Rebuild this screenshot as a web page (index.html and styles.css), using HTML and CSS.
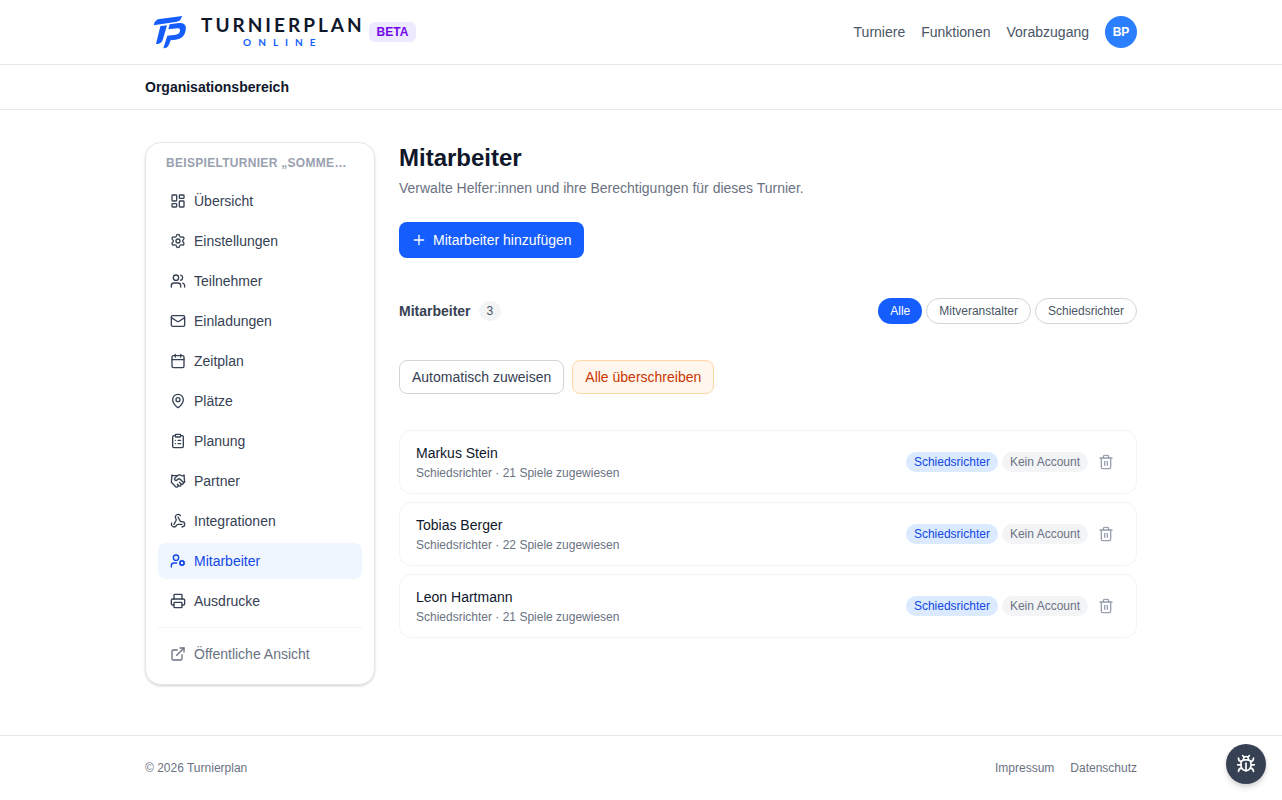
FILE: index.html
```html
<!DOCTYPE html>
<html lang="de">
<head>
    <meta charset="UTF-8">
    <meta name="viewport" content="width=device-width, initial-scale=1.0">
    <title>Mitarbeiter - Turnierplan</title>
    <link rel="stylesheet" href="styles.css">
</head>
<body>
    <header class="topbar">
        <div class="container topbar-inner">
            <a href="#" class="brand">
                <svg class="brand-mark" viewBox="0 0 102 102" aria-hidden="true">
                    <path d="M2 31C4 20 10 13 20 12L88 3L83 13C81 17 77 19 72 20Z"/>
                    <path d="M22 34C23 33 25 33 42 31L30 72C27 82 22 87 9 87Z"/>
                    <path d="M50 28L78 24C94 22 101 31 98 46C95 64 84 72 68 74L53 76L47 91C44 97 40 99 31 100L43 62L68 59C76 58 80 54 81 48C82 42 79 39 73 40L46 43Z"/>
                </svg>
                <span class="brand-text">
                    <span class="brand-name">TURNIERPLAN</span>
                    <span class="brand-sub">ONLINE</span>
                </span>
            </a>
            <span class="beta">BETA</span>
            <nav class="topnav">
                <a href="#">Turniere</a>
                <a href="#">Funktionen</a>
                <a href="#">Vorabzugang</a>
                <button type="button" class="avatar">BP</button>
            </nav>
        </div>
    </header>

    <div class="subbar">
        <div class="container">Organisationsbereich</div>
    </div>

    <div class="container layout">
        <aside class="sidebar">
            <div class="sidebar-title">Beispielturnier „Somme…</div>
            <nav class="menu">
                <a href="#">
                    <svg class="icon" viewBox="0 0 24 24"><rect width="7" height="9" x="3" y="3" rx="1"/><rect width="7" height="5" x="14" y="3" rx="1"/><rect width="7" height="9" x="14" y="12" rx="1"/><rect width="7" height="5" x="3" y="16" rx="1"/></svg>
                    Übersicht
                </a>
                <a href="#">
                    <svg class="icon" viewBox="0 0 24 24"><path d="M9.671 4.136a2.34 2.34 0 0 1 4.659 0 2.34 2.34 0 0 0 3.319 1.915 2.34 2.34 0 0 1 2.33 4.033 2.34 2.34 0 0 0 0 3.831 2.34 2.34 0 0 1-2.33 4.033 2.34 2.34 0 0 0-3.319 1.915 2.34 2.34 0 0 1-4.659 0 2.34 2.34 0 0 0-3.32-1.915 2.34 2.34 0 0 1-2.33-4.033 2.34 2.34 0 0 0 0-3.831A2.34 2.34 0 0 1 6.35 6.051a2.34 2.34 0 0 0 3.319-1.915"/><circle cx="12" cy="12" r="3"/></svg>
                    Einstellungen
                </a>
                <a href="#">
                    <svg class="icon" viewBox="0 0 24 24"><path d="M16 21v-2a4 4 0 0 0-4-4H6a4 4 0 0 0-4 4v2"/><circle cx="9" cy="7" r="4"/><path d="M22 21v-2a4 4 0 0 0-3-3.87"/><path d="M16 3.13a4 4 0 0 1 0 7.75"/></svg>
                    Teilnehmer
                </a>
                <a href="#">
                    <svg class="icon" viewBox="0 0 24 24"><path d="m22 7-8.991 5.727a2 2 0 0 1-2.009 0L2 7"/><rect x="2" y="4" width="20" height="16" rx="2"/></svg>
                    Einladungen
                </a>
                <a href="#">
                    <svg class="icon" viewBox="0 0 24 24"><path d="M8 2v4"/><path d="M16 2v4"/><rect width="18" height="18" x="3" y="4" rx="2"/><path d="M3 10h18"/></svg>
                    Zeitplan
                </a>
                <a href="#">
                    <svg class="icon" viewBox="0 0 24 24"><path d="M20 10c0 4.993-5.539 10.193-7.399 11.799a1 1 0 0 1-1.202 0C9.539 20.193 4 14.993 4 10a8 8 0 0 1 16 0"/><circle cx="12" cy="10" r="3"/></svg>
                    Plätze
                </a>
                <a href="#">
                    <svg class="icon" viewBox="0 0 24 24"><rect width="8" height="4" x="8" y="2" rx="1"/><path d="M16 4h2a2 2 0 0 1 2 2v14a2 2 0 0 1-2 2H6a2 2 0 0 1-2-2V6a2 2 0 0 1 2-2h2"/><path d="M12 11h4"/><path d="M12 16h4"/><path d="M8 11h.01"/><path d="M8 16h.01"/></svg>
                    Planung
                </a>
                <a href="#">
                    <svg class="icon" viewBox="0 0 24 24"><path d="m11 17 2 2a1 1 0 1 0 3-3"/><path d="m14 14 2.5 2.5a1 1 0 1 0 3-3l-3.88-3.88a3 3 0 0 0-4.24 0l-.88.88a1 1 0 1 1-3-3l2.81-2.81a5.79 5.79 0 0 1 7.06-.87l.47.28a2 2 0 0 0 1.42.25L21 4"/><path d="m21 3 1 11h-2"/><path d="M3 3 2 14l6.5 6.5a1 1 0 1 0 3-3"/><path d="M3 4h8"/></svg>
                    Partner
                </a>
                <a href="#">
                    <svg class="icon" viewBox="0 0 24 24"><path d="M18 16.98h-5.99c-1.1 0-1.95.94-2.48 1.9A4 4 0 0 1 2 17c.01-.7.2-1.4.57-2"/><path d="m6 17 3.13-5.78c.53-.97.1-2.18-.5-3.1a4 4 0 1 1 6.89-4.06"/><path d="m12 6 3.13 5.73C15.66 12.7 16.9 13 18 13a4 4 0 0 1 0 8"/></svg>
                    Integrationen
                </a>
                <a href="#" class="active">
                    <svg class="icon" viewBox="0 0 24 24"><path d="M10 15H6a4 4 0 0 0-4 4v2"/><circle cx="9" cy="7" r="4"/><circle cx="18" cy="15" r="3"/><path d="m14.305 16.53.923-.382"/><path d="m15.228 13.852-.923-.383"/><path d="m16.852 12.228-.383-.923"/><path d="m16.852 17.772-.383.924"/><path d="m19.148 12.228.383-.923"/><path d="m19.53 18.696-.382-.924"/><path d="m20.772 13.852.924-.383"/><path d="m20.772 16.148.924.383"/></svg>
                    Mitarbeiter
                </a>
                <a href="#">
                    <svg class="icon" viewBox="0 0 24 24"><path d="M6 18H4a2 2 0 0 1-2-2v-5a2 2 0 0 1 2-2h16a2 2 0 0 1 2 2v5a2 2 0 0 1-2 2h-2"/><path d="M6 9V3a1 1 0 0 1 1-1h10a1 1 0 0 1 1 1v6"/><rect x="6" y="14" width="12" height="8" rx="1"/></svg>
                    Ausdrucke
                </a>
            </nav>
            <div class="menu menu-extra">
                <a href="#">
                    <svg class="icon" viewBox="0 0 24 24"><path d="M15 3h6v6"/><path d="M10 14 21 3"/><path d="M18 13v6a2 2 0 0 1-2 2H5a2 2 0 0 1-2-2V8a2 2 0 0 1 2-2h6"/></svg>
                    Öffentliche Ansicht
                </a>
            </div>
        </aside>

        <main class="content">
            <h1>Mitarbeiter</h1>
            <p class="lead">Verwalte Helfer:innen und ihre Berechtigungen für dieses Turnier.</p>

            <button type="button" class="btn btn-primary">
                <svg class="icon" viewBox="0 0 24 24"><path d="M5 12h14"/><path d="M12 5v14"/></svg>
                Mitarbeiter hinzufügen
            </button>

            <div class="list-head">
                <h2>Mitarbeiter</h2>
                <span class="count">3</span>
                <div class="filters">
                    <button type="button" class="pill selected">Alle</button>
                    <button type="button" class="pill">Mitveranstalter</button>
                    <button type="button" class="pill">Schiedsrichter</button>
                </div>
            </div>

            <div class="actions">
                <button type="button" class="btn btn-outline">Automatisch zuweisen</button>
                <button type="button" class="btn btn-warn">Alle überschreiben</button>
            </div>

            <ul class="staff">
                <li class="person">
                    <div class="person-info">
                        <div class="person-name">Markus Stein</div>
                        <div class="person-meta">Schiedsrichter · 21 Spiele zugewiesen</div>
                    </div>
                    <span class="tag tag-role">Schiedsrichter</span>
                    <span class="tag">Kein Account</span>
                    <button type="button" class="delete" aria-label="Markus Stein entfernen">
                        <svg class="icon" viewBox="0 0 24 24"><path d="M10 11v6"/><path d="M14 11v6"/><path d="M19 6v14a2 2 0 0 1-2 2H7a2 2 0 0 1-2-2V6"/><path d="M3 6h18"/><path d="M8 6V4a2 2 0 0 1 2-2h4a2 2 0 0 1 2 2v2"/></svg>
                    </button>
                </li>
                <li class="person">
                    <div class="person-info">
                        <div class="person-name">Tobias Berger</div>
                        <div class="person-meta">Schiedsrichter · 22 Spiele zugewiesen</div>
                    </div>
                    <span class="tag tag-role">Schiedsrichter</span>
                    <span class="tag">Kein Account</span>
                    <button type="button" class="delete" aria-label="Tobias Berger entfernen">
                        <svg class="icon" viewBox="0 0 24 24"><path d="M10 11v6"/><path d="M14 11v6"/><path d="M19 6v14a2 2 0 0 1-2 2H7a2 2 0 0 1-2-2V6"/><path d="M3 6h18"/><path d="M8 6V4a2 2 0 0 1 2-2h4a2 2 0 0 1 2 2v2"/></svg>
                    </button>
                </li>
                <li class="person">
                    <div class="person-info">
                        <div class="person-name">Leon Hartmann</div>
                        <div class="person-meta">Schiedsrichter · 21 Spiele zugewiesen</div>
                    </div>
                    <span class="tag tag-role">Schiedsrichter</span>
                    <span class="tag">Kein Account</span>
                    <button type="button" class="delete" aria-label="Leon Hartmann entfernen">
                        <svg class="icon" viewBox="0 0 24 24"><path d="M10 11v6"/><path d="M14 11v6"/><path d="M19 6v14a2 2 0 0 1-2 2H7a2 2 0 0 1-2-2V6"/><path d="M3 6h18"/><path d="M8 6V4a2 2 0 0 1 2-2h4a2 2 0 0 1 2 2v2"/></svg>
                    </button>
                </li>
            </ul>
        </main>
    </div>

    <footer class="footer">
        <div class="container footer-inner">
            <span>© 2026 Turnierplan</span>
            <nav class="footer-links">
                <a href="#">Impressum</a>
                <a href="#">Datenschutz</a>
            </nav>
        </div>
    </footer>

    <button type="button" class="bug-button" aria-label="Fehler melden">
        <svg class="icon" viewBox="0 0 24 24"><path d="m8 2 1.88 1.88"/><path d="M14.12 3.88 16 2"/><path d="M9 7.13v-1a3.003 3.003 0 1 1 6 0v1"/><path d="M12 20c-3.3 0-6-2.7-6-6v-3a4 4 0 0 1 4-4h4a4 4 0 0 1 4 4v3c0 3.3-2.7 6-6 6"/><path d="M12 20v-9"/><path d="M6.53 9C4.6 8.8 3 7.1 3 5"/><path d="M6 13H2"/><path d="M3 21c0-2.1 1.7-3.9 3.8-4"/><path d="M20.97 5c0 2.1-1.6 3.8-3.5 4"/><path d="M22 13h-4"/><path d="M17.2 17c2.1.1 3.8 1.9 3.8 4"/></svg>
    </button>
</body>
</html>
```
FILE: styles.css
```css
* {
    box-sizing: border-box;
}
body {
    margin: 0;
    min-height: 100vh;
    display: flex;
    flex-direction: column;
    font-family: "Liberation Sans", Arial, sans-serif;
    font-size: 14px;
    line-height: 20px;
    color: #0f172b;
    background-color: #fff;
}
a {
    color: inherit;
    text-decoration: none;
}
button {
    font: inherit;
    color: inherit;
    cursor: pointer;
}
h1, h2, p, ul {
    margin: 0;
    padding: 0;
}
.container {
    width: 100%;
    max-width: 1024px;
    margin: 0 auto;
    padding: 0 16px;
}
.icon {
    width: 16px;
    height: 16px;
    flex-shrink: 0;
    fill: none;
    stroke: currentColor;
    stroke-width: 2;
    stroke-linecap: round;
    stroke-linejoin: round;
}

/* header */
.topbar {
    border-bottom: 1px solid #e5e7eb;
}
.topbar-inner {
    display: flex;
    align-items: center;
    height: 64px;
}
.brand {
    display: flex;
    align-items: center;
    gap: 14px;
    padding-left: 8px;
}
.brand-mark {
    width: 34px;
    height: 34px;
    fill: #155dfc;
}
.brand-text {
    display: flex;
    flex-direction: column;
    align-items: center;
    font-family: Lato, sans-serif;
}
.brand-name {
    font-size: 19px;
    font-weight: bold;
    line-height: 20px;
    letter-spacing: 3px;
}
.brand-sub {
    font-size: 10px;
    font-weight: bold;
    line-height: 14px;
    letter-spacing: 7px;
    color: #155dfc;
}
.beta {
    margin-left: 4px;
    padding: 2px 8px;
    border-radius: 6px;
    background-color: #ede9fe;
    color: #7008e7;
    font-size: 12px;
    font-weight: bold;
    line-height: 16px;
}
.topnav {
    display: flex;
    align-items: center;
    gap: 16px;
    margin-left: auto;
    color: #4a5565;
}
.avatar {
    width: 32px;
    height: 32px;
    padding: 0;
    border: 0;
    border-radius: 50%;
    background-color: #2b7fff;
    color: white;
    font-size: 12px;
    font-weight: bold;
}
.subbar {
    padding: 12px 0;
    border-bottom: 1px solid #e5e7eb;
    font-weight: bold;
}

/* layout */
.layout {
    flex: 1;
    display: grid;
    grid-template-columns: 230px 1fr;
    gap: 24px;
    align-items: start;
    padding-top: 32px;
    padding-bottom: 32px;
}
.sidebar {
    min-width: 0;
    padding: 12px;
    border: 1px solid #e5e7eb;
    border-radius: 16px;
    box-shadow: 0 1px 3px rgba(0, 0, 0, 0.1), 0 1px 2px rgba(0, 0, 0, 0.1);
}
.sidebar-title {
    margin-bottom: 12px;
    padding: 0 8px;
    white-space: nowrap;
    text-transform: uppercase;
    letter-spacing: 0.025em;
    font-size: 12px;
    font-weight: bold;
    line-height: 16px;
    color: #99a1af;
}
.menu {
    display: flex;
    flex-direction: column;
    gap: 4px;
    color: #364153;
}
.menu a {
    display: flex;
    align-items: center;
    gap: 8px;
    padding: 8px 12px;
    border-radius: 8px;
}
.menu .active {
    background-color: #eff6ff;
    color: #1447e6;
}
.menu-extra {
    margin-top: 8px;
    padding-top: 8px;
    border-top: 1px solid #f3f4f6;
    color: #6a7282;
}

/* content */
.content {
    min-width: 0;
}
h1 {
    font-size: 24px;
    line-height: 32px;
}
.lead {
    margin-top: 4px;
    margin-bottom: 24px;
    color: #6a7282;
}
.btn {
    display: inline-flex;
    align-items: center;
    gap: 6px;
    padding: 6px 12px;
    border: 1px solid transparent;
    border-radius: 8px;
}
.btn-primary {
    padding: 8px 12px;
    border: 0;
    background-color: #155dfc;
    color: white;
}
.btn-outline {
    border-color: #d1d5dc;
    background-color: white;
    color: #364153;
}
.btn-warn {
    border-color: #ffd6a8;
    background-color: #fff7ed;
    color: #ca3500;
}
.list-head {
    display: flex;
    align-items: center;
    gap: 8px;
    margin-top: 40px;
}
h2 {
    font-size: 14px;
    line-height: 20px;
    color: #364153;
}
.count {
    padding: 2px 8px;
    border-radius: 10px;
    background-color: #f3f4f6;
    color: #4a5565;
    font-size: 12px;
    line-height: 16px;
}
.filters {
    display: flex;
    gap: 4px;
    margin-left: auto;
}
.pill {
    padding: 4px 12px;
    border: 1px solid #d1d5dc;
    border-radius: 13px;
    background-color: white;
    color: #4a5565;
    font-size: 12px;
    line-height: 16px;
}
.pill.selected {
    border: 0;
    background-color: #155dfc;
    color: white;
}
.actions {
    display: flex;
    gap: 8px;
    margin: 36px 0;
}
.staff {
    display: flex;
    flex-direction: column;
    gap: 8px;
    list-style: none;
}
.person {
    display: flex;
    align-items: center;
    gap: 4px;
    padding: 12px 16px;
    border: 1px solid #f3f4f6;
    border-radius: 12px;
}
.person-info {
    flex: 1;
}
.person-meta {
    margin-top: 2px;
    font-size: 12px;
    line-height: 16px;
    color: #6a7282;
}
.tag {
    padding: 2px 8px;
    border-radius: 10px;
    background-color: #f3f4f6;
    color: #6a7282;
    font-size: 12px;
    line-height: 16px;
}
.tag-role {
    background-color: #dbeafe;
    color: #1447e6;
}
.delete {
    display: flex;
    padding: 6px;
    border: 0;
    background: none;
    color: #99a1af;
}

/* footer */
.footer {
    padding: 24px 0;
    border-top: 1px solid #e5e7eb;
    font-size: 12px;
    line-height: 16px;
    color: #6a7282;
}
.footer-inner {
    display: flex;
    justify-content: space-between;
}
.footer-links {
    display: flex;
    gap: 16px;
}
.bug-button {
    position: fixed;
    right: 16px;
    bottom: 16px;
    display: flex;
    align-items: center;
    justify-content: center;
    width: 40px;
    height: 40px;
    padding: 0;
    border: 0;
    border-radius: 50%;
    background-color: #364153;
    color: white;
    box-shadow: 0 4px 6px rgba(0, 0, 0, 0.1), 0 2px 4px rgba(0, 0, 0, 0.1);
}
.bug-button .icon {
    width: 20px;
    height: 20px;
}
```
